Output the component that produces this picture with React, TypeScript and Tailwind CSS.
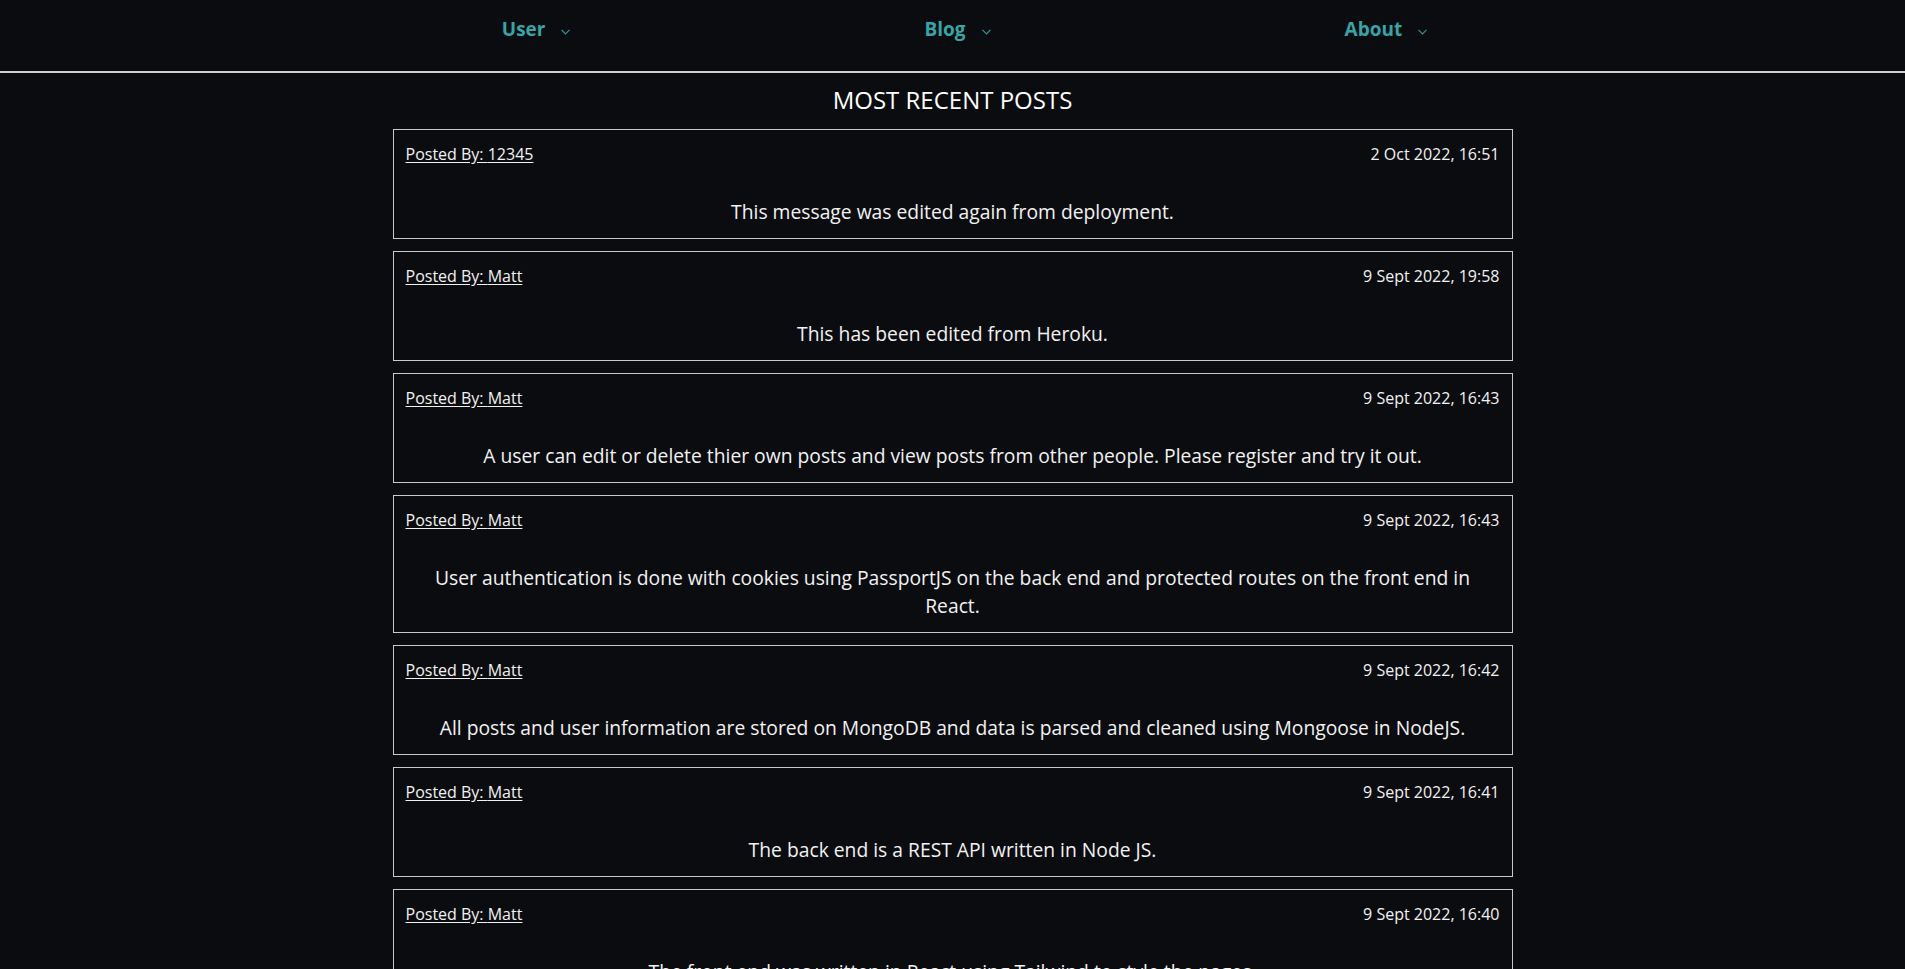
import React from "react";

interface Post {
    author: string;
    date: string;
    message: string;
}

const posts: Post[] = [
    { author: "12345", date: "2 Oct 2022, 16:51", message: "This message was edited again from deployment." },
    { author: "Matt", date: "9 Sept 2022, 19:58", message: "This has been edited from Heroku." },
    {
        author: "Matt",
        date: "9 Sept 2022, 16:43",
        message: "A user can edit or delete thier own posts and view posts from other people. Please register and try it out.",
    },
    {
        author: "Matt",
        date: "9 Sept 2022, 16:43",
        message:
            "User authentication is done with cookies using PassportJS on the back end and protected routes on the front end in React.",
    },
    {
        author: "Matt",
        date: "9 Sept 2022, 16:42",
        message:
            "All posts and user information are stored on MongoDB and data is parsed and cleaned using Mongoose in NodeJS.",
    },
    { author: "Matt", date: "9 Sept 2022, 16:41", message: "The back end is a REST API written in Node JS." },
    {
        author: "Matt",
        date: "9 Sept 2022, 16:40",
        message: "The front end was written in React using Tailwind to style the pages.",
    },
];

const Chevron = () => (
    <svg width="9" height="6" viewBox="0 0 9 6" fill="none" className="mt-1 text-[#2f9494]">
        <polyline points="0.5,0.8 4.5,4.8 8.5,0.8" stroke="currentColor" strokeWidth="1.2" />
    </svg>
);

const NavItem = ({ label }: { label: string }) => (
    <button className="flex items-center gap-4 text-[19px] font-bold text-[#3aa3a6]">
        <span>{label}</span>
        <Chevron />
    </button>
);

const PostCard = ({ post }: { post: Post }) => (
    <div className="border border-[#c8c8c8] p-3 text-[#f2f2f2]">
        <div className="flex items-center justify-between text-base">
            <a href="#" className="underline underline-offset-2">
                Posted By: {post.author}
            </a>
            <span>{post.date}</span>
        </div>
        <p className="mt-8 text-center text-[19.3px] leading-7">{post.message}</p>
    </div>
);

export default function App() {
    return (
        <div className="min-h-screen bg-[#0b0c10] font-['Open_Sans',sans-serif] text-white">
            {/* Nav */}
            <nav className="flex h-[73px] items-center justify-center gap-[354px] border-b-2 border-[#d0d0d0] pb-[12px] pl-6">
                <NavItem label="User" />
                <NavItem label="Blog" />
                <NavItem label="About" />
            </nav>

            {/* Posts */}
            <main className="mx-auto w-[1120px]">
                <h1 className="mt-[11px] mb-[13px] text-center text-2xl">MOST RECENT POSTS</h1>
                <div className="flex flex-col gap-3">
                    {posts.map((post, i) => (
                        <PostCard key={i} post={post} />
                    ))}
                </div>
            </main>
        </div>
    );
}
